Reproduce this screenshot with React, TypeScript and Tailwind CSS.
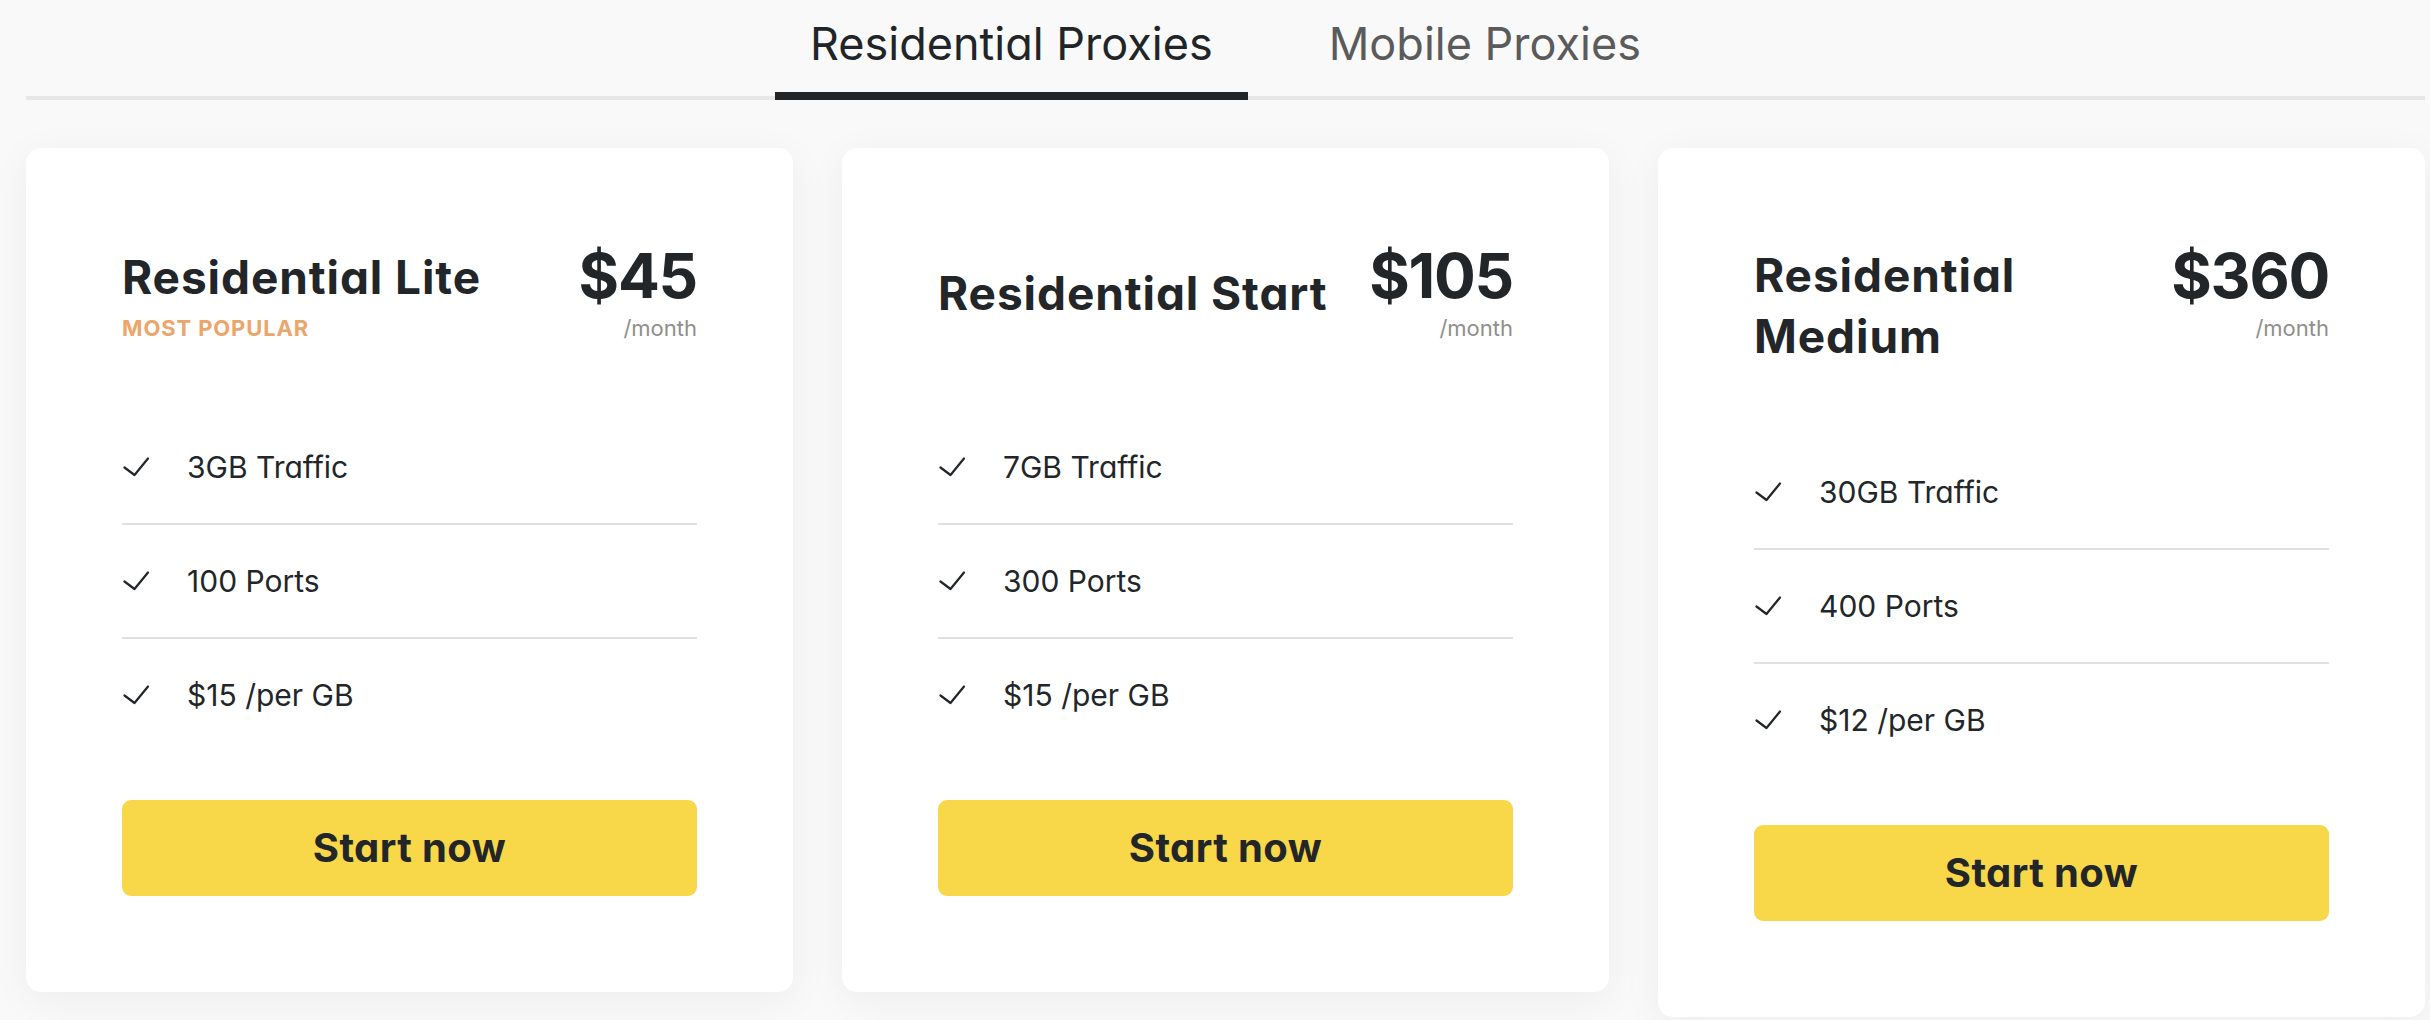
import React from "react";

type Plan = {
  title: string;
  sub?: string;
  price: string;
  features: string[];
  tall?: boolean;
};

const plans: Plan[] = [
  { title: "Residential Lite", sub: "MOST POPULAR", price: "$45", features: ["3GB Traffic", "100 Ports", "$15 /per GB"] },
  { title: "Residential Start", price: "$105", features: ["7GB Traffic", "300 Ports", "$15 /per GB"] },
  { title: "Residential Medium", price: "$360", features: ["30GB Traffic", "400 Ports", "$12 /per GB"], tall: true },
];

const Check = () => (
  <svg width="28" height="20" viewBox="0 0 28 20" fill="none" className="shrink-0">
    <path d="M2.5 10.5 L12.5 18 L26 1.5" stroke="#222628" strokeWidth="2.2" strokeLinecap="round" strokeLinejoin="round" />
  </svg>
);

function Card({ plan }: { plan: Plan }) {
  return (
    <div className="w-[767px] shrink-0 rounded-[15px] bg-white px-[96px] pt-[97px] pb-[96px] shadow-[0_8px_40px_rgba(0,0,0,0.05)]">
      <div className={plan.tall ? "flex justify-between gap-4 items-start" : "flex justify-between gap-4 items-center"}>
        <div className="flex flex-col">
          <div
            className={
              plan.tall
                ? "text-[46px] leading-[60.5px] font-bold tracking-[0.02em] text-[#222628]"
                : "text-[46px] leading-[62px] font-bold tracking-[0.02em] text-[#222628]"
            }
          >
            {plan.title}
          </div>
          {plan.sub && (
            <div className="mt-[8px] text-[22px] leading-[25px] font-bold tracking-[0.04em] text-[#eba66b]">{plan.sub}</div>
          )}
        </div>
        <div className="flex flex-col items-end shrink-0">
          <div className="text-[62px] leading-[62px] font-bold tracking-[-0.02em] text-[#222628]">{plan.price}</div>
          <div className="mt-[8px] text-[22px] leading-[26px] text-[#8e8e8e]">/month</div>
        </div>
      </div>
      <div className="mt-[70px] flex flex-col">
        {plan.features.map((f, i) => (
          <React.Fragment key={f}>
            {i > 0 && <div className="h-[2px] bg-[#e1e1e1]" />}
            <div className="flex h-[112px] items-center gap-[37px] text-[30px] text-[#222628]">
              <Check />
              <span>{f}</span>
            </div>
          </React.Fragment>
        ))}
      </div>
      <button className="mt-[49px] flex h-[96px] w-full items-center justify-center rounded-[9px] bg-[#f8d749] text-[40px] font-bold tracking-[0.01em] text-[#222628]">
        Start now
      </button>
    </div>
  );
}

export default function App() {
  return (
    <div className="min-h-[1020px] bg-[#f9f9f9] font-['Inter',sans-serif] [font-feature-settings:'cv11']">
      <div className="ml-[26px] flex w-[2399px] justify-center border-b-4 border-[#e7e7e7]">
        <div className="-mb-[4px] flex gap-[46px]">
          <div className="border-b-8 border-[#222528] px-[35px] pt-[17px] pb-[21px] text-[45px] leading-[54px] text-[#222528]">
            Residential Proxies
          </div>
          <div className="border-b-8 border-transparent px-[35px] pt-[17px] pb-[21px] text-[45px] leading-[54px] text-[#5b5b5b]">
            Mobile Proxies
          </div>
        </div>
      </div>
      <div className="ml-[26px] mt-[48px] flex items-start gap-[49px]">
        {plans.map((p) => (
          <Card key={p.title} plan={p} />
        ))}
      </div>
    </div>
  );
}
